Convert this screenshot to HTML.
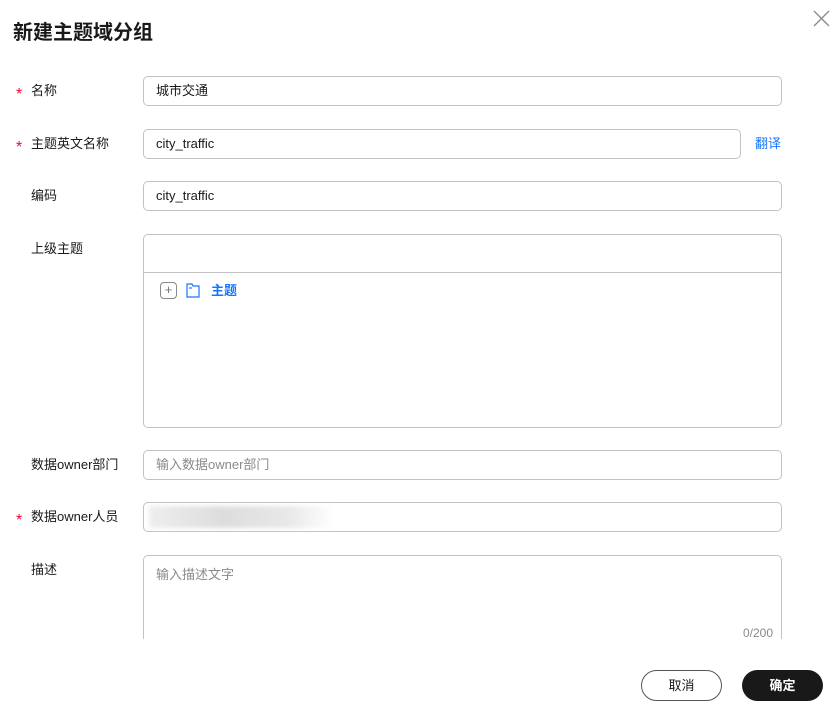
<!DOCTYPE html><html><head><meta charset="utf-8"><style>
*{box-sizing:border-box;margin:0;padding:0}
body{width:832px;height:709px;background:#fff;position:relative;overflow:hidden;font-family:"Liberation Sans","Noto Sans CJK SC",sans-serif;color:#191919;font-size:13px}
.a{position:absolute}
.lbl{position:absolute;left:31px;font-size:13px;line-height:16px}
.req{position:absolute;left:16px;color:#f03;font-size:16px;line-height:16px}
.in{position:absolute;left:143px;width:639px;height:30px;border:1px solid #c2c2c2;border-radius:5px;padding-left:12px;line-height:28px;font-size:13px}
.ph{color:#8a8a8a}
</style></head><body>
<div class="a" style="left:13px;top:21px;font-size:20px;font-weight:bold;line-height:24px">新建主题域分组</div>
<svg class="a" style="left:812px;top:9px" width="19" height="19" viewBox="0 0 19 19"><path d="M2 2L17 17M17 2L2 17" stroke="#888" stroke-width="1.3"/></svg>

<span class="req" style="top:87px">*</span><div class="lbl" style="top:83px">名称</div>
<div class="in" style="top:76px">城市交通</div>

<span class="req" style="top:140px">*</span><div class="lbl" style="top:136px">主题英文名称</div>
<div class="in" style="top:129px;width:598px">city_traffic</div>
<div class="a" style="left:755px;top:136px;color:#1476ff;line-height:16px">翻译</div>

<div class="lbl" style="top:188px">编码</div>
<div class="in" style="top:181px">city_traffic</div>

<div class="lbl" style="top:241px">上级主题</div>
<div class="a" style="left:143px;top:234px;width:639px;height:194px;border:1px solid #c2c2c2;border-radius:5px"></div>
<div class="a" style="left:143px;top:272px;width:639px;height:1px;background:#c2c2c2"></div>
<div class="a" style="left:160px;top:282px;width:17px;height:17px;border:1px solid #888;border-radius:4px;text-align:center;line-height:14px;color:#777;font-size:13px">+</div>
<svg class="a" style="left:186px;top:283px" width="14" height="15" viewBox="0 0 14 15"><path d="M1 1H6L7 3H13V14H1Z" fill="none" stroke="#1476ff" stroke-width="1.2"/><path d="M3 5H6" stroke="#1476ff" stroke-width="1.2"/></svg>
<div class="a" style="left:211px;top:283px;color:#1476ff;font-weight:bold;line-height:16px">主题</div>

<div class="lbl" style="top:457px">数据owner部门</div>
<div class="in ph" style="top:450px">输入数据owner部门</div>

<span class="req" style="top:513px">*</span><div class="lbl" style="top:509px">数据owner人员</div>
<div class="in" style="top:502px"></div>
<div class="a" style="left:149px;top:506px;width:185px;height:22px;background:linear-gradient(90deg,#eee,#ddd 40%,#e8e8e8 75%,#fff);filter:blur(2px)"></div>

<div class="lbl" style="top:562px">描述</div>
<div class="a ph" style="left:143px;top:555px;width:639px;height:100px;border:1px solid #c2c2c2;border-radius:5px;padding:11px 12px;line-height:16px">输入描述文字</div>
<div class="a" style="left:0;top:639px;width:832px;height:70px;background:#fff"></div>
<div class="a" style="left:743px;top:625px;color:#8a8a8a;font-size:12px;line-height:16px">0/200</div>

<div class="a" style="left:641px;top:670px;width:81px;height:31px;border:1px solid #555;border-radius:16px;text-align:center;line-height:29px">取消</div>
<div class="a" style="left:742px;top:670px;width:81px;height:31px;background:#191919;color:#fff;border-radius:16px;text-align:center;line-height:31px;font-weight:bold">确定</div>
</body></html>
